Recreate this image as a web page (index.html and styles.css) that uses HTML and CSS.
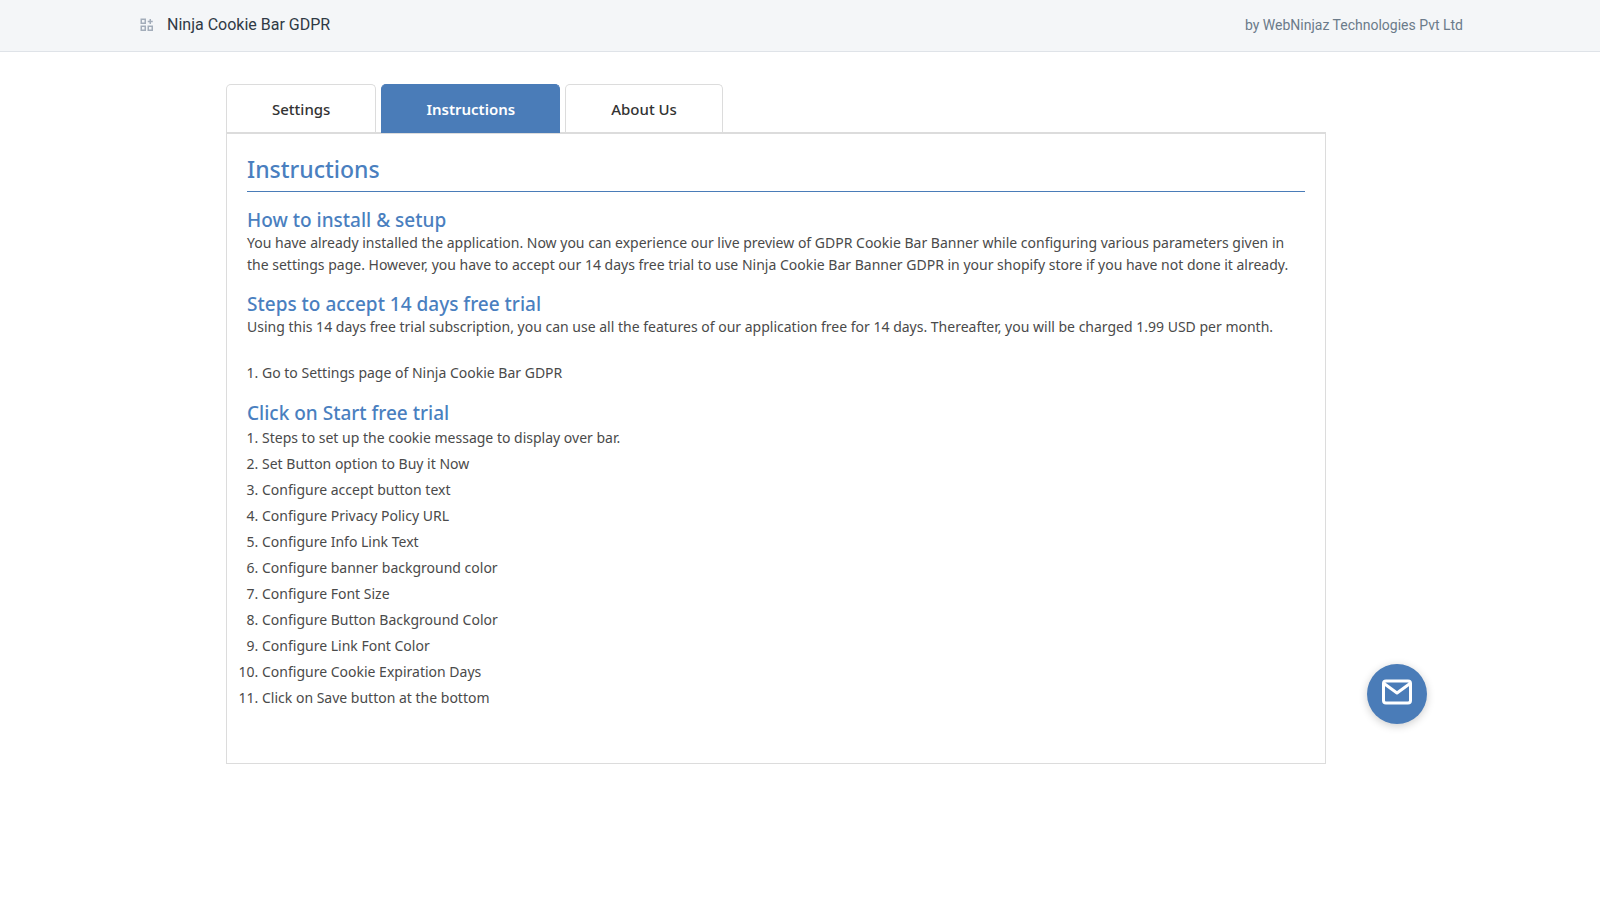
FILE: index.html
```html
<!DOCTYPE html>
<html lang="en">
<head>
<meta charset="utf-8">
<meta name="viewport" content="width=device-width, initial-scale=1">
<title>Ninja Cookie Bar GDPR</title>
<link rel="stylesheet" href="styles.css">
</head>
<body>
<header class="topbar">
  <div class="app-name">
    <svg class="app-icon" viewBox="0 0 14 14" fill="none" stroke="#a3adba" stroke-width="1.5" aria-hidden="true">
      <rect x="1.25" y="1.25" width="4" height="4"/>
      <rect x="1.25" y="8.25" width="4" height="4"/>
      <rect x="8.25" y="8.25" width="4" height="4"/>
      <path d="M10.25 1v5M7.75 3.5h5"/>
    </svg>
    <span>Ninja Cookie Bar GDPR</span>
  </div>
  <span class="vendor">by WebNinjaz Technologies Pvt Ltd</span>
</header>
<main class="page">
  <div class="content">
    <nav class="tabs" role="tablist">
      <button class="tab" type="button" role="tab" aria-selected="false">Settings</button>
      <button class="tab tab-active" type="button" role="tab" aria-selected="true">Instructions</button>
      <button class="tab" type="button" role="tab" aria-selected="false">About Us</button>
    </nav>
    <section class="panel">
      <h1 class="title">Instructions</h1>
      <h2 class="subtitle">How to install &amp; setup</h2>
      <p class="text">You have already installed the application. Now you can experience our live preview of GDPR Cookie Bar Banner while configuring various parameters given in the settings page. However, you have to accept our 14 days free trial to use Ninja Cookie Bar Banner GDPR in your shopify store if you have not done it already.</p>
      <h2 class="subtitle">Steps to accept 14 days free trial</h2>
      <p class="text">Using this 14 days free trial subscription, you can use all the features of our application free for 14 days. Thereafter, you will be charged 1.99 USD per month.</p>
      <ol class="steps steps-single">
        <li>Go to Settings page of Ninja Cookie Bar GDPR</li>
      </ol>
      <h2 class="subtitle">Click on Start free trial</h2>
      <ol class="steps">
        <li>Steps to set up the cookie message to display over bar.</li>
        <li>Set Button option to Buy it Now</li>
        <li>Configure accept button text</li>
        <li>Configure Privacy Policy URL</li>
        <li>Configure Info Link Text</li>
        <li>Configure banner background color</li>
        <li>Configure Font Size</li>
        <li>Configure Button Background Color</li>
        <li>Configure Link Font Color</li>
        <li>Configure Cookie Expiration Days</li>
        <li>Click on Save button at the bottom</li>
      </ol>
    </section>
  </div>
</main>
<button class="mail-button" type="button" aria-label="Contact us">
  <svg class="mail-icon" viewBox="0 0 30 26" fill="none" stroke="#fff" stroke-width="3" stroke-linejoin="round" aria-hidden="true">
    <rect x="1.5" y="2" width="27" height="22" rx="2.5"/>
    <path d="M2 4.5l13 9.5 13-9.5"/>
  </svg>
</button>
</body>
</html>
```

FILE: styles.css
```css
* {
  box-sizing: border-box;
}

body {
  margin: 0;
  background: #fff;
  color: #4a4a4a;
  font-family: "Noto Sans", "Open Sans", sans-serif;
  font-size: 14px;
  line-height: 22px;
}

.topbar {
  display: flex;
  align-items: center;
  justify-content: space-between;
  height: 52px;
  padding: 0 137px 2px 140px;
  background: #f4f6f8;
  border-bottom: 1px solid #dfe3e8;
  font-family: Roboto, sans-serif;
}

.app-name {
  display: flex;
  align-items: center;
  gap: 13px;
  color: #2f3a45;
  font-size: 16px;
}

.app-icon {
  width: 14px;
  height: 14px;
}

.vendor {
  color: #6b7b8a;
  font-size: 14px;
}

.page {
  padding: 32px 48px 32px 0;
}

.content {
  max-width: 1100px;
  margin: 0 auto;
}

.tabs {
  display: flex;
  gap: 5px;
}

.tab {
  height: 48px;
  padding: 0 45px;
  border: 1px solid #dcdcdc;
  border-bottom: 0;
  border-radius: 5px 5px 0 0;
  background: #fff;
  color: #333;
  font-family: inherit;
  font-size: 15px;
  font-weight: 500;
  white-space: nowrap;
}

.tab-active {
  position: relative;
  height: 49px;
  margin-bottom: -1px;
  padding: 0 44px;
  border-color: #4a7cb8;
  background: #4a7cb8;
  color: #fff;
  font-weight: 600;
}

.panel {
  padding: 20px 20px 52px;
  border: 1px solid #dcdcdc;
  border-top-width: 2px;
}

.title {
  margin: 0 0 16px;
  padding-bottom: 7px;
  border-bottom: 1px solid #4a7cb8;
  color: #4a7fbf;
  font-size: 23px;
  font-weight: 500;
  line-height: 30px;
}

.subtitle {
  margin: 0;
  color: #4a7fbf;
  font-size: 19px;
  font-weight: 500;
  line-height: 24px;
}

.text {
  margin: 0 0 16px;
}

.steps {
  margin: 0;
  padding-left: 15px;
}

.steps li {
  padding: 2px 0;
}

.steps-single {
  margin: 22px 0 15px;
}

.mail-button {
  position: fixed;
  right: 173px;
  bottom: 176px;
  display: flex;
  align-items: center;
  justify-content: center;
  width: 60px;
  height: 60px;
  padding: 0 0 4px;
  border: 0;
  border-radius: 50%;
  background: #4a7cb8;
  box-shadow: 0 2px 8px rgba(0, 0, 0, 0.2);
}

.mail-icon {
  width: 30px;
  height: 26px;
}
```
